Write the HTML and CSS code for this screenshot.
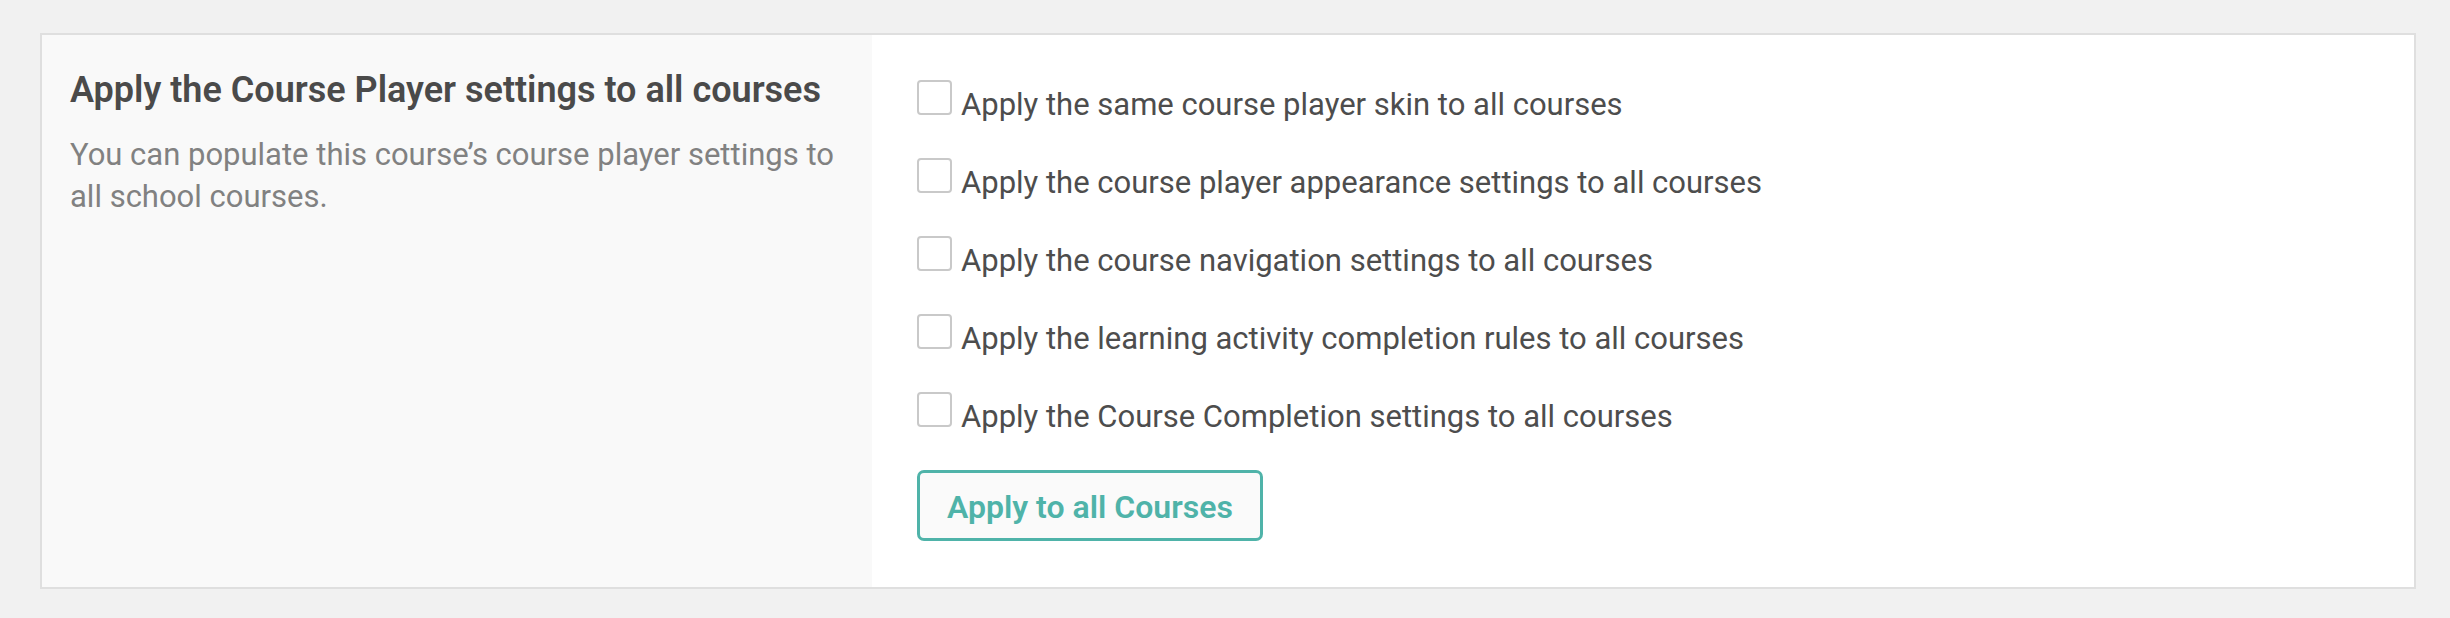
FILE: index.html
```html
<!DOCTYPE html>
<html lang="en">
<head>
<meta charset="utf-8">
<title>Course Player settings</title>
<link rel="stylesheet" href="styles.css">
</head>
<body>
<main class="page">
  <section class="card">
    <div class="card-info">
      <h2 class="card-title">Apply the Course Player settings to all courses</h2>
      <p class="card-desc">You can populate this course’s course player settings to all school courses.</p>
    </div>
    <div class="card-body">
      <label class="option"><input type="checkbox" class="option-check"><span class="option-text">Apply the same course player skin to all courses</span></label>
      <label class="option"><input type="checkbox" class="option-check"><span class="option-text">Apply the course player appearance settings to all courses</span></label>
      <label class="option"><input type="checkbox" class="option-check"><span class="option-text">Apply the course navigation settings to all courses</span></label>
      <label class="option"><input type="checkbox" class="option-check"><span class="option-text">Apply the learning activity completion rules to all courses</span></label>
      <label class="option"><input type="checkbox" class="option-check"><span class="option-text">Apply the Course Completion settings to all courses</span></label>
      <button type="button" class="apply-btn">Apply to all Courses</button>
    </div>
  </section>
</main>
</body>
</html>
```
FILE: styles.css
```css
html, body {
  margin: 0;
  padding: 0;
  background: #f1f1f1;
}

body {
  font-family: Roboto, "Liberation Sans", Arial, sans-serif;
}

.page {
  padding: 33px 34px 29px 40px;
}

.card {
  display: flex;
  border: 2px solid #dfdfdf;
  background: #ffffff;
}

.card-info {
  flex: 0 0 830px;
  box-sizing: border-box;
  padding: 32px 28px 0 28px;
  background: #f9f9f9;
}

.card-title {
  margin: 0;
  font-size: 36px;
  font-weight: 600;
  line-height: 46px;
  color: #4a4a4a;
}

.card-desc {
  margin: 21px 0 0 0;
  font-size: 31px;
  line-height: 42px;
  color: #818181;
}

.card-body {
  flex: 1 1 auto;
  padding: 45px 45px 46px 45px;
}

.option {
  display: block;
  height: 42px;
  margin-bottom: 36px;
  font-size: 31px;
  line-height: 35px;
  color: #4d4d4d;
  white-space: nowrap;
  cursor: pointer;
}

.option-check {
  -webkit-appearance: none;
  appearance: none;
  display: inline-block;
  box-sizing: border-box;
  width: 35px;
  height: 35px;
  margin: 0 9px 0 0;
  border: 2px solid #c9c9c9;
  border-radius: 4px;
  background: #ffffff;
  vertical-align: baseline;
  cursor: pointer;
}

.apply-btn {
  display: block;
  box-sizing: border-box;
  height: 71px;
  margin: 0;
  padding: 3px 27px 0 27px;
  border: 3px solid #4fb3a9;
  border-radius: 7px;
  background: #fafafa;
  font-family: Roboto, "Liberation Sans", Arial, sans-serif;
  font-size: 32px;
  font-weight: 600;
  line-height: 62px;
  color: #4fb3a9;
  cursor: pointer;
}
```
